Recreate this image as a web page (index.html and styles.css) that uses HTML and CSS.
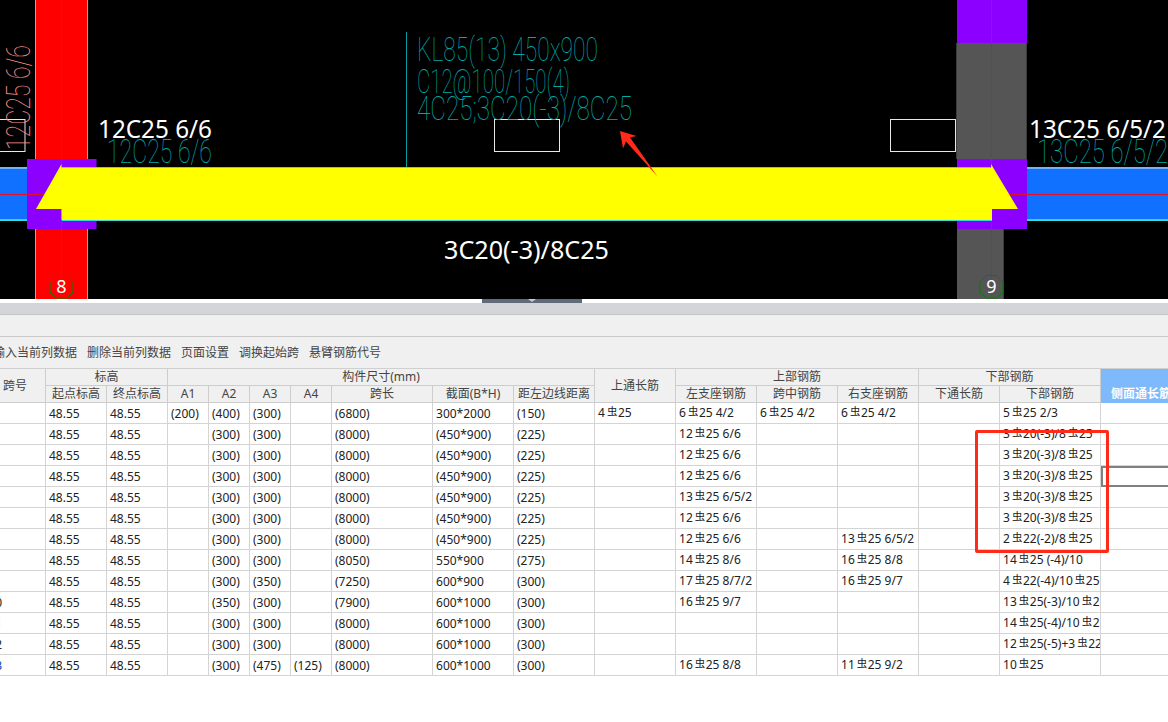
FILE: index.html
```html
<!DOCTYPE html>
<html lang="zh-CN">
<head>
<meta charset="utf-8">
<title>KL85</title>
<link rel="stylesheet" href="styles.css">
</head>
<body>
<div class="app">
  <svg class="cad" width="1168" height="299" viewBox="0 0 1168 299">
    <rect class="red" x="35" y="0" width="53" height="299"/>
    <path class="cyan" d="M35.5 0V299M87.5 0V299"/>
    <rect class="blue" x="0" y="167" width="28" height="54"/>
    <rect class="blue" x="1027" y="167" width="141" height="54"/>
    <path class="lightblue" d="M0 168.5H28M1027 168.5H1168M0 219.500H28M1027 219.500H1168"/>
    <path class="cyan" d="M0 167.5H28M1027 167.5H1168M0 220.5H28M1027 220.5H1168"/>
    <rect class="grey" x="957" y="43" width="70" height="117"/>
    <rect class="grey" x="957" y="229" width="47" height="70"/>
    <path class="greyedge" d="M1003.5 229V299M956.500 43V159M1026.500 43V159"/>
    <rect class="purple" x="957" y="0" width="70" height="43"/>
    <rect class="purple" x="27" y="159" width="69.500" height="70"/>
    <rect class="purple" x="957" y="159" width="70" height="70"/>
    <path class="redline" d="M61.5 0V299M991.5 0V299M0 194.5H45M1010 194.5H1168"/>
    <path class="yellow" d="M61.5 164L36 209H61.5V220H992V209H1018L991 164V167.5H61.5Z"/>
    <path class="cyan" d="M62 167.5H990M62 220.5H992"/>
    <path class="tealline" d="M406.5 32V167"/>
    <rect class="box" x="-5" y="119.5" width="30" height="32"/>
    <rect class="box" x="494.5" y="119.5" width="65" height="32"/>
    <rect class="box" x="890.5" y="119.5" width="65" height="32"/>
    <text class="cadtext" x="417" y="61" textLength="181" lengthAdjust="spacingAndGlyphs">KL85(13) 450x900</text>
    <text class="cadtext" x="417" y="93" textLength="153" lengthAdjust="spacingAndGlyphs">C12@100/150(4)</text>
    <text class="cadtext" x="417" y="120" textLength="215" lengthAdjust="spacingAndGlyphs">4C25;3C20(-3)/8C25</text>
    <text class="cadtext" x="107" y="163" textLength="105" lengthAdjust="spacingAndGlyphs">12C25 6/6</text>
    <text class="cadtext" x="1037" y="163" textLength="131" lengthAdjust="spacingAndGlyphs">13C25 6/5/2</text>
    <text class="cadtext pink" transform="translate(30 150) rotate(-90)" x="0" y="0" textLength="105" lengthAdjust="spacingAndGlyphs">12C25 6/6</text>
    <text class="whitetext" x="98" y="138" textLength="114" lengthAdjust="spacingAndGlyphs">12C25 6/6</text>
    <text class="whitetext" x="1029" y="138" textLength="137" lengthAdjust="spacingAndGlyphs">13C25 6/5/2</text>
    <text class="whitetext" x="444" y="259" textLength="165" lengthAdjust="spacingAndGlyphs">3C20(-3)/8C25</text>
    <path class="axis" d="M56.5 275.5L66.500 275.500L73 282L73 292L66.500 298L56.500 298L50 292L50 282Z"/>
    <path class="axis" d="M986.500 275.500L996.500 275.500L1003 282L1003 292L996.500 298L986.500 298L980 292L980 282Z"/>
    <text class="axisnum" x="61.500" y="293">8</text>
    <text class="axisnum" x="991.500" y="293">9</text>
    <path class="arrow" d="M620 131L636.500 136L630 137.500L657.500 176.500L626 141.500L623 148.500Z"/>
  </svg>

  <div class="sash"><span class="sash-handle"><span class="sash-caret"></span></span></div>
  <div class="tabbar"></div>
  <div class="subbar"></div>
  <div class="toolbar">
    <span class="tool tool-first">输入当前列数据</span>
    <span class="tool">删除当前列数据</span>
    <span class="tool">页面设置</span>
    <span class="tool">调换起始跨</span>
    <span class="tool">悬臂钢筋代号</span>
  </div>

  <div class="grid-wrap">
    <table class="grid">
      <colgroup>
        <col class="w61"><col class="w61"><col class="w61">
        <col class="w41"><col class="w41"><col class="w41"><col class="w41">
        <col class="w101"><col class="w81"><col class="w81"><col class="w81">
        <col class="w81"><col class="w81"><col class="w81"><col class="w81">
        <col class="w101"><col class="w81">
      </colgroup>
      <thead>
        <tr>
          <th rowspan="2">跨号</th>
          <th colspan="2">标高</th>
          <th colspan="7">构件尺寸(mm)</th>
          <th rowspan="2">上通长筋</th>
          <th colspan="3">上部钢筋</th>
          <th colspan="2">下部钢筋</th>
          <th class="sel-head"></th>
        </tr>
        <tr>
          <th>起点标高</th><th>终点标高</th>
          <th>A1</th><th>A2</th><th>A3</th><th>A4</th>
          <th>跨长</th><th>截面(B*H)</th><th>距左边线距离</th>
          <th>左支座钢筋</th><th>跨中钢筋</th><th>右支座钢筋</th>
          <th>下通长筋</th><th>下部钢筋</th>
          <th class="sel-head sel-text">侧面通长筋</th>
        </tr>
      </thead>
      <tbody>
        <tr><td>1</td><td>48.55</td><td>48.55</td><td>(200)</td><td>(400)</td><td>(300)</td><td></td><td>(6800)</td><td>300*2000</td><td>(150)</td><td class="bar">4<i>虫</i>25</td><td class="bar">6<i>虫</i>25 4/2</td><td class="bar">6<i>虫</i>25 4/2</td><td class="bar">6<i>虫</i>25 4/2</td><td></td><td class="bar">5<i>虫</i>25 2/3</td><td></td></tr>
        <tr><td>2</td><td>48.55</td><td>48.55</td><td></td><td>(300)</td><td>(300)</td><td></td><td>(8000)</td><td>(450*900)</td><td>(225)</td><td></td><td class="bar">12<i>虫</i>25 6/6</td><td></td><td></td><td></td><td class="bar">3<i>虫</i>20(-3)/8<i>虫</i>25</td><td></td></tr>
        <tr><td>3</td><td>48.55</td><td>48.55</td><td></td><td>(300)</td><td>(300)</td><td></td><td>(8000)</td><td>(450*900)</td><td>(225)</td><td></td><td class="bar">12<i>虫</i>25 6/6</td><td></td><td></td><td></td><td class="bar">3<i>虫</i>20(-3)/8<i>虫</i>25</td><td></td></tr>
        <tr><td>4</td><td>48.55</td><td>48.55</td><td></td><td>(300)</td><td>(300)</td><td></td><td>(8000)</td><td>(450*900)</td><td>(225)</td><td></td><td class="bar">12<i>虫</i>25 6/6</td><td></td><td></td><td></td><td class="bar">3<i>虫</i>20(-3)/8<i>虫</i>25</td><td class="current"></td></tr>
        <tr><td>5</td><td>48.55</td><td>48.55</td><td></td><td>(300)</td><td>(300)</td><td></td><td>(8000)</td><td>(450*900)</td><td>(225)</td><td></td><td class="bar">13<i>虫</i>25 6/5/2</td><td></td><td></td><td></td><td class="bar">3<i>虫</i>20(-3)/8<i>虫</i>25</td><td></td></tr>
        <tr><td>6</td><td>48.55</td><td>48.55</td><td></td><td>(300)</td><td>(300)</td><td></td><td>(8000)</td><td>(450*900)</td><td>(225)</td><td></td><td class="bar">12<i>虫</i>25 6/6</td><td></td><td></td><td></td><td class="bar">3<i>虫</i>20(-3)/8<i>虫</i>25</td><td></td></tr>
        <tr><td>7</td><td>48.55</td><td>48.55</td><td></td><td>(300)</td><td>(300)</td><td></td><td>(8000)</td><td>(450*900)</td><td>(225)</td><td></td><td class="bar">12<i>虫</i>25 6/6</td><td></td><td class="bar">13<i>虫</i>25 6/5/2</td><td></td><td class="bar">2<i>虫</i>22(-2)/8<i>虫</i>25</td><td></td></tr>
        <tr><td>8</td><td>48.55</td><td>48.55</td><td></td><td>(300)</td><td>(300)</td><td></td><td>(8050)</td><td>550*900</td><td>(275)</td><td></td><td class="bar">14<i>虫</i>25 8/6</td><td></td><td class="bar">16<i>虫</i>25 8/8</td><td></td><td class="bar">14<i>虫</i>25 (-4)/10</td><td></td></tr>
        <tr><td>9</td><td>48.55</td><td>48.55</td><td></td><td>(300)</td><td>(350)</td><td></td><td>(7250)</td><td>600*900</td><td>(300)</td><td></td><td class="bar">17<i>虫</i>25 8/7/2</td><td></td><td class="bar">16<i>虫</i>25 9/7</td><td></td><td class="bar">4<i>虫</i>22(-4)/10<i>虫</i>25</td><td></td></tr>
        <tr><td>10</td><td>48.55</td><td>48.55</td><td></td><td>(350)</td><td>(300)</td><td></td><td>(7900)</td><td>600*1000</td><td>(300)</td><td></td><td class="bar">16<i>虫</i>25 9/7</td><td></td><td></td><td></td><td class="bar">13<i>虫</i>25(-3)/10<i>虫</i>25</td><td></td></tr>
        <tr><td>11</td><td>48.55</td><td>48.55</td><td></td><td>(300)</td><td>(300)</td><td></td><td>(8000)</td><td>600*1000</td><td>(300)</td><td></td><td></td><td></td><td></td><td></td><td class="bar">14<i>虫</i>25(-4)/10<i>虫</i>25</td><td></td></tr>
        <tr><td>12</td><td>48.55</td><td>48.55</td><td></td><td>(300)</td><td>(300)</td><td></td><td>(8000)</td><td>600*1000</td><td>(300)</td><td></td><td></td><td></td><td></td><td></td><td class="bar">12<i>虫</i>25(-5)+3<i>虫</i>22</td><td></td></tr>
        <tr><td class="last">13</td><td>48.55</td><td>48.55</td><td></td><td>(300)</td><td>(475)</td><td>(125)</td><td>(8000)</td><td>600*1000</td><td>(300)</td><td></td><td class="bar">16<i>虫</i>25 8/8</td><td></td><td class="bar">11<i>虫</i>25 9/2</td><td></td><td class="bar">10<i>虫</i>25</td><td></td></tr>
      </tbody>
    </table>
    <div class="callout"></div>
  </div>
</div>
</body>
</html>
```
FILE: styles.css
```css
html, body {
  margin: 0;
  padding: 0;
  background: #fff;
  overflow: hidden;
}
.app {
  width: 1168px;
  height: 722px;
  overflow: hidden;
  display: flex;
  flex-direction: column;
  font-family: "Noto Sans", "Noto Sans CJK SC", sans-serif;
  font-size: 12px;
  color: #222;
}
.cad {
  display: block;
  flex: none;
  background: #000;
}
.red { fill: #ff0000; }
.blue { fill: #1070ff; }
.lightblue { stroke: #6fb0ff; stroke-width: 1; fill: none; }
.cyan { stroke: #35dcdc; stroke-width: 1; fill: none; }
.grey { fill: #555555; }
.greyedge { stroke: #3c3c3c; stroke-width: 1; fill: none; }
.purple { fill: #8b00ff; }
.redline { stroke: #e0102a; stroke-width: 1; fill: none; }
.yellow { fill: #ffff00; }
.tealline { stroke: #00a0a0; stroke-width: 1; fill: none; }
.box { fill: none; stroke: #e8e8e8; stroke-width: 1; }
.cadtext {
  font-family: "Roboto", "Inter", sans-serif;
  font-weight: 100;
  font-size: 33px;
  fill: #00a8a8;
}
.pink { fill: #ff9090; }
.whitetext {
  font-family: "Noto Sans", sans-serif;
  font-size: 25px;
  fill: #fff;
}
.axis { fill: none; stroke: #008000; stroke-width: 1; }
.axisnum {
  font-family: "Noto Sans", sans-serif;
  font-size: 18px;
  fill: #fff;
  text-anchor: middle;
}
.arrow { fill: #ff2a17; }

.sash {
  flex: none;
  height: 4px;
  background: #fff;
  position: relative;
}
.sash-handle {
  position: absolute;
  left: 482px;
  top: 0;
  width: 100px;
  height: 4px;
  background: #5f6b78;
}
.sash-caret {
  position: absolute;
  left: 46px;
  top: 0;
  width: 0;
  height: 0;
  border-left: 4px solid transparent;
  border-right: 4px solid transparent;
  border-top: 3px solid #c8ccd0;
}
.tabbar {
  flex: none;
  height: 11px;
  background: #d3d5d9;
  border-bottom: 1px solid #c4c4c4;
}
.subbar {
  flex: none;
  height: 21px;
  background: #f0f0f0;
  border-bottom: 1px solid #c8c8c8;
}
.toolbar {
  flex: none;
  box-sizing: border-box;
  height: 31px;
  padding-top: 1px;
  background: #f0f0f0;
  display: flex;
  align-items: center;
  gap: 10px;
  color: #444;
  line-height: 16px;
}
.tool { white-space: nowrap; }
.tool-first { margin-left: -7px; }

.grid-wrap {
  position: relative;
  flex: 1;
  overflow: hidden;
  border-top: 1px solid #cfcfcf;
}
.grid {
  table-layout: fixed;
  border-collapse: separate;
  border-spacing: 0;
  width: 1197px;
  margin-left: -15px;
}
.w41 { width: 41px; }
.w61 { width: 61px; }
.w81 { width: 81px; }
.w101 { width: 101px; }
.grid th {
  box-sizing: border-box;
  height: 17px;
  padding: 0;
  background: #f0f0f0;
  border-right: 1px solid #cdcdcd;
  border-bottom: 1px solid #cdcdcd;
  font-weight: 400;
  color: #444;
  text-align: center;
  line-height: 16px;
  white-space: nowrap;
  overflow: hidden;
}
.grid th.sel-head {
  background: #7eb9fb;
  border-right-color: #7eb9fb;
  border-bottom-color: #7eb9fb;
}
.grid th.sel-text {
  color: #fff;
  font-weight: 700;
}
.grid td {
  box-sizing: border-box;
  height: 21px;
  padding: 2px 3px 0;
  border-right: 1px solid #d4d4d4;
  border-bottom: 1px solid #d4d4d4;
  line-height: 18px;
  white-space: nowrap;
  overflow: hidden;
  color: #222;
}
.grid td:first-child { padding-left: 3.5px; }
.grid td.bar { line-height: 20px; padding-top: 0; }
.grid td.bar i {
  font-style: normal;
  font-size: 10.5px;
  position: relative;
  top: -2px;
  margin: 0 0.5px 0 2px;
  font-family: "Noto Sans CJK SC", sans-serif;
}
.grid td.last { color: #0a3fa8; }
.grid td.current {
  outline: 2px solid #808080;
  outline-offset: -2px;
}
.callout {
  position: absolute;
  left: 975px;
  top: 61px;
  width: 134px;
  height: 123px;
  box-sizing: border-box;
  border: 3px solid #ff2a17;
  border-radius: 2px;
}
```
